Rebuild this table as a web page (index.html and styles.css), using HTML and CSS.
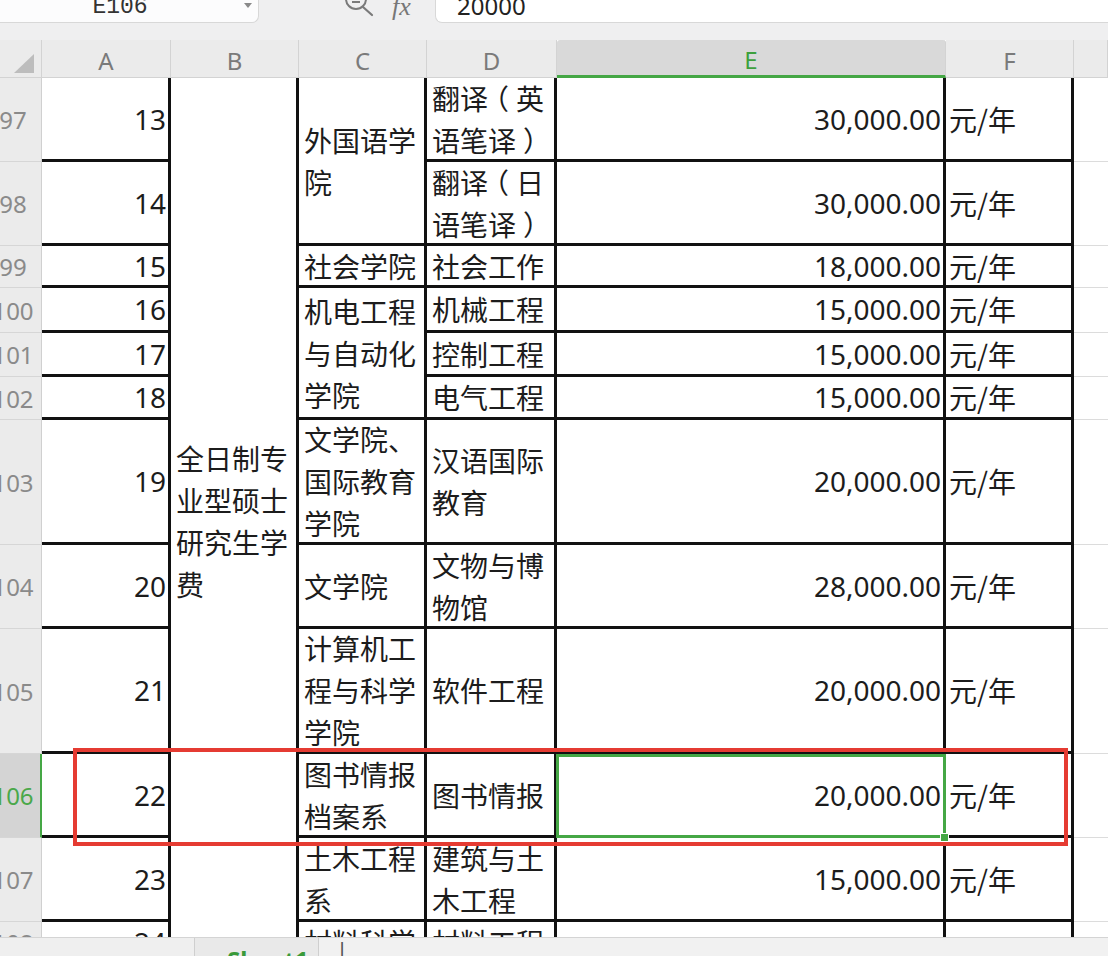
FILE: index.html
```html
<!DOCTYPE html>
<html lang="zh-CN">
<head>
<meta charset="utf-8">
<title>Sheet</title>
<link rel="stylesheet" href="styles.css">
</head>
<body>
<div class="app">
  <div class="toolbar">
    <div class="namebox">
      <span class="name">E106</span>
      <svg class="dd" viewBox="0 0 8 6"><path d="M0 0 L8 0 L4 5 Z" fill="#8a8a8a"/></svg>
    </div>
    <div class="fbtns">
      <svg class="zoomicon" viewBox="0 0 32 18"><circle cx="13" cy="-1" r="10" fill="none" stroke="#7a7a7a" stroke-width="2"/><path d="M9 2 H17" stroke="#7a7a7a" stroke-width="2"/><path d="M20 7 L29 15" stroke="#7a7a7a" stroke-width="2.2" stroke-linecap="round"/></svg>
      <span class="fx">fx</span>
    </div>
    <div class="formula"><span class="fval">20000</span></div>
  </div>

  <div class="sheet">
    <div class="grid">
      <div class="corner"><span class="tri"></span></div>
      <div class="ch">A</div>
      <div class="ch">B</div>
      <div class="ch">C</div>
      <div class="ch">D</div>
      <div class="ch ch-on">E</div>
      <div class="ch">F</div>
      <div class="ch"></div>

      <!-- 97 -->
      <div class="rh"><span>97</span></div>
      <div class="c num">13</div>
      <div class="c txt merge-b"><div>全日制专业型硕士研究生学费</div></div>
      <div class="c txt span2"><div>外国语学院</div></div>
      <div class="c txt"><div>翻译<span class="po">（</span>英语笔译<span class="pc">）</span></div></div>
      <div class="c money">30,000.00</div>
      <div class="c txt unit">元/年</div>
      <div class="g"></div>

      <!-- 98 -->
      <div class="rh"><span>98</span></div>
      <div class="c num">14</div>
      <div class="c txt"><div>翻译<span class="po">（</span>日语笔译<span class="pc">）</span></div></div>
      <div class="c money">30,000.00</div>
      <div class="c txt unit">元/年</div>
      <div class="g"></div>

      <!-- 99 -->
      <div class="rh"><span>99</span></div>
      <div class="c num">15</div>
      <div class="c txt"><div>社会学院</div></div>
      <div class="c txt"><div>社会工作</div></div>
      <div class="c money">18,000.00</div>
      <div class="c txt unit">元/年</div>
      <div class="g"></div>

      <!-- 100 -->
      <div class="rh"><span>100</span></div>
      <div class="c num">16</div>
      <div class="c txt span3"><div>机电工程与自动化学院</div></div>
      <div class="c txt"><div>机械工程</div></div>
      <div class="c money">15,000.00</div>
      <div class="c txt unit">元/年</div>
      <div class="g"></div>

      <!-- 101 -->
      <div class="rh"><span>101</span></div>
      <div class="c num">17</div>
      <div class="c txt"><div>控制工程</div></div>
      <div class="c money">15,000.00</div>
      <div class="c txt unit">元/年</div>
      <div class="g"></div>

      <!-- 102 -->
      <div class="rh"><span>102</span></div>
      <div class="c num">18</div>
      <div class="c txt"><div>电气工程</div></div>
      <div class="c money">15,000.00</div>
      <div class="c txt unit">元/年</div>
      <div class="g"></div>

      <!-- 103 -->
      <div class="rh"><span>103</span></div>
      <div class="c num">19</div>
      <div class="c txt"><div>文学院、国际教育学院</div></div>
      <div class="c txt"><div>汉语国际教育</div></div>
      <div class="c money">20,000.00</div>
      <div class="c txt unit">元/年</div>
      <div class="g"></div>

      <!-- 104 -->
      <div class="rh"><span>104</span></div>
      <div class="c num">20</div>
      <div class="c txt"><div>文学院</div></div>
      <div class="c txt"><div>文物与博物馆</div></div>
      <div class="c money">28,000.00</div>
      <div class="c txt unit">元/年</div>
      <div class="g"></div>

      <!-- 105 -->
      <div class="rh"><span>105</span></div>
      <div class="c num">21</div>
      <div class="c txt"><div>计算机工程与科学学院</div></div>
      <div class="c txt"><div>软件工程</div></div>
      <div class="c money">20,000.00</div>
      <div class="c txt unit">元/年</div>
      <div class="g"></div>

      <!-- 106 -->
      <div class="rh rh-on"><span>106</span></div>
      <div class="c num">22</div>
      <div class="c txt"><div>图书情报档案系</div></div>
      <div class="c txt"><div>图书情报</div></div>
      <div class="c money selcell">20,000.00<span class="sel"></span><span class="handle"></span></div>
      <div class="c txt unit">元/年</div>
      <div class="g"></div>

      <!-- 107 -->
      <div class="rh"><span>107</span></div>
      <div class="c num">23</div>
      <div class="c txt"><div>土木工程系</div></div>
      <div class="c txt"><div>建筑与土木工程</div></div>
      <div class="c money">15,000.00</div>
      <div class="c txt unit">元/年</div>
      <div class="g"></div>

      <!-- 108 -->
      <div class="rh"><span>108</span></div>
      <div class="c num">24</div>
      <div class="c txt"><div>材料科学</div></div>
      <div class="c txt"><div>材料工程</div></div>
      <div class="c money"></div>
      <div class="c txt unit"></div>
      <div class="g"></div>
    </div>
  </div>

  <div class="tabs">
    <div class="tnav"></div>
    <div class="tab">Sheet1</div>
    <div class="tscroll"><span class="caret">|</span></div>
  </div>

  <div class="mark"></div>
</div>
</body>
</html>
```

FILE: styles.css
```css
* { box-sizing: border-box; }
html, body { margin: 0; padding: 0; }
body {
  width: 1108px;
  height: 956px;
  overflow: hidden;
  background: #ffffff;
  font-family: "Noto Sans CJK SC", "Noto Sans", sans-serif;
}
.app {
  position: relative;
  width: 1108px;
  height: 956px;
  display: flex;
  flex-direction: column;
  overflow: hidden;
}

/* toolbar */
.toolbar {
  height: 40px;
  flex: none;
  background: #efeff0;
  display: flex;
  align-items: flex-start;
}
.namebox {
  width: 259px;
  height: 23px;
  flex: none;
  background: #fcfcfd;
  border-right: 1px solid #d8d8d8;
  border-bottom: 1px solid #d8d8d8;
  border-bottom-right-radius: 7px;
  display: flex;
  align-items: flex-start;
  overflow: hidden;
}
.name {
  flex: 1;
  text-align: center;
  font: 23px/23px "Liberation Mono", monospace;
  color: #333;
  margin-top: -4px;
  padding-right: 4px;
}
.dd { width: 8px; height: 6px; margin: 3px 6px 0 0; flex: none; }
.fbtns {
  width: 176px;
  flex: none;
  display: flex;
  align-items: flex-start;
  padding-left: 84px;
  gap: 17px;
}
.zoomicon { width: 32px; height: 18px; flex: none; }
.fx {
  font: italic 26px/26px "Liberation Serif", serif;
  color: #777;
  margin-top: -6px;
}
.formula {
  flex: 1;
  height: 23px;
  background: #ffffff;
  border-left: 1px solid #d8d8d8;
  border-bottom: 1px solid #d8d8d8;
  border-bottom-left-radius: 7px;
  padding-left: 21px;
  overflow: hidden;
}
.fval {
  display: block;
  font: 24px/24px "Noto Sans", sans-serif;
  color: #222;
  margin-top: -6px;
}

/* sheet grid */
.sheet {
  flex: 1;
  overflow: hidden;
  background: #ffffff;
}
.grid {
  display: grid;
  grid-template-columns: 42px 129px 128px 128px 130px 389px 128px 1fr;
  grid-template-rows: 38px 84px 84px 42px 45px 44px 43px 125px 84px 125px 84px 84px 42px;
}
.corner {
  background: #ebebeb;
  border-right: 1px solid #d3d3d3;
  border-bottom: 1px solid #d3d3d3;
  padding: 14px 0 0 14px;
}
.tri {
  display: block;
  width: 0;
  height: 0;
  border-left: 20px solid transparent;
  border-bottom: 19px solid #bdbdbd;
}
.ch {
  background: #ebebeb;
  border-right: 1px solid #d3d3d3;
  border-bottom: 1px solid #d3d3d3;
  display: flex;
  align-items: center;
  justify-content: center;
  padding-top: 3px;
  font: 24px "Noto Sans", sans-serif;
  color: #7a7a7a;
}
.ch-on {
  background: #d9d9d9;
  color: #3da03d;
  border-bottom: 3px solid #45a745;
  border-radius: 3px 3px 0 0;
}
.rh {
  background: #ebebeb;
  border-right: 1px solid #d0d0d0;
  border-bottom: 1px solid #d6d6d6;
  overflow: hidden;
  display: flex;
  align-items: center;
}
.rh span {
  flex: none;
  width: 80px;
  margin-left: -27px;
  text-align: center;
  font: 24px "Noto Sans", sans-serif;
  color: #8a8a8a;
}
.rh-on {
  background: #d4d4d4;
  border-right: 2px solid #45a745;
}
.rh-on span { color: #4aa84a; }

.c {
  border-right: 3px solid #111;
  border-bottom: 3px solid #111;
  display: flex;
  align-items: center;
  font-size: 28px;
  line-height: 42px;
  color: #1c1c1c;
  min-width: 0;
  overflow: hidden;
}
.po { margin-left: -7px; margin-right: 7px; }
.pc { margin-left: 7px; margin-right: -7px; }
.num, .money {
  justify-content: flex-end;
  padding-right: 2px;
  font-family: "Noto Sans", sans-serif;
}
.txt { padding-left: 5px; }
.unit { padding-left: 3px; }
.merge-b { grid-row: span 12; border-bottom: none; }
.span2 { grid-row: span 2; }
.span3 { grid-row: span 3; }
.g {
  border-bottom: 1px solid #dcdcdc;
  background: #ffffff;
}

.selcell { position: relative; overflow: visible; }
.sel {
  position: absolute;
  top: 0;
  left: -1px;
  right: -3px;
  bottom: -3px;
  border: 3px solid #45a745;
}
.handle {
  position: absolute;
  right: -6px;
  bottom: -7px;
  width: 9px;
  height: 9px;
  background: #45a745;
  border: 1px solid #ffffff;
}

/* tabs */
.tabs {
  height: 19px;
  flex: none;
  display: flex;
  background: #e9e9e9;
  border-top: 1px solid #d4d4d4;
  overflow: hidden;
}
.tnav {
  width: 195px;
  flex: none;
  background: #efefef;
  border-right: 1px solid #cfcfcf;
}
.tab {
  width: 123px;
  flex: none;
  padding: 10px 0 0 32px;
  font: bold 24px/24px "Noto Sans", sans-serif;
  color: #3a9a3a;
}
.tscroll {
  flex: 1;
  background: #f1f1f1;
  border-left: 1px solid #cfcfcf;
  padding-left: 17px;
}
.caret {
  display: block;
  font: 22px/22px "Noto Sans", sans-serif;
  color: #555;
}

/* annotation */
.mark {
  position: absolute;
  top: 748px;
  left: 73px;
  width: 995px;
  height: 98px;
  border: 4px solid #e53b32;
}
```
